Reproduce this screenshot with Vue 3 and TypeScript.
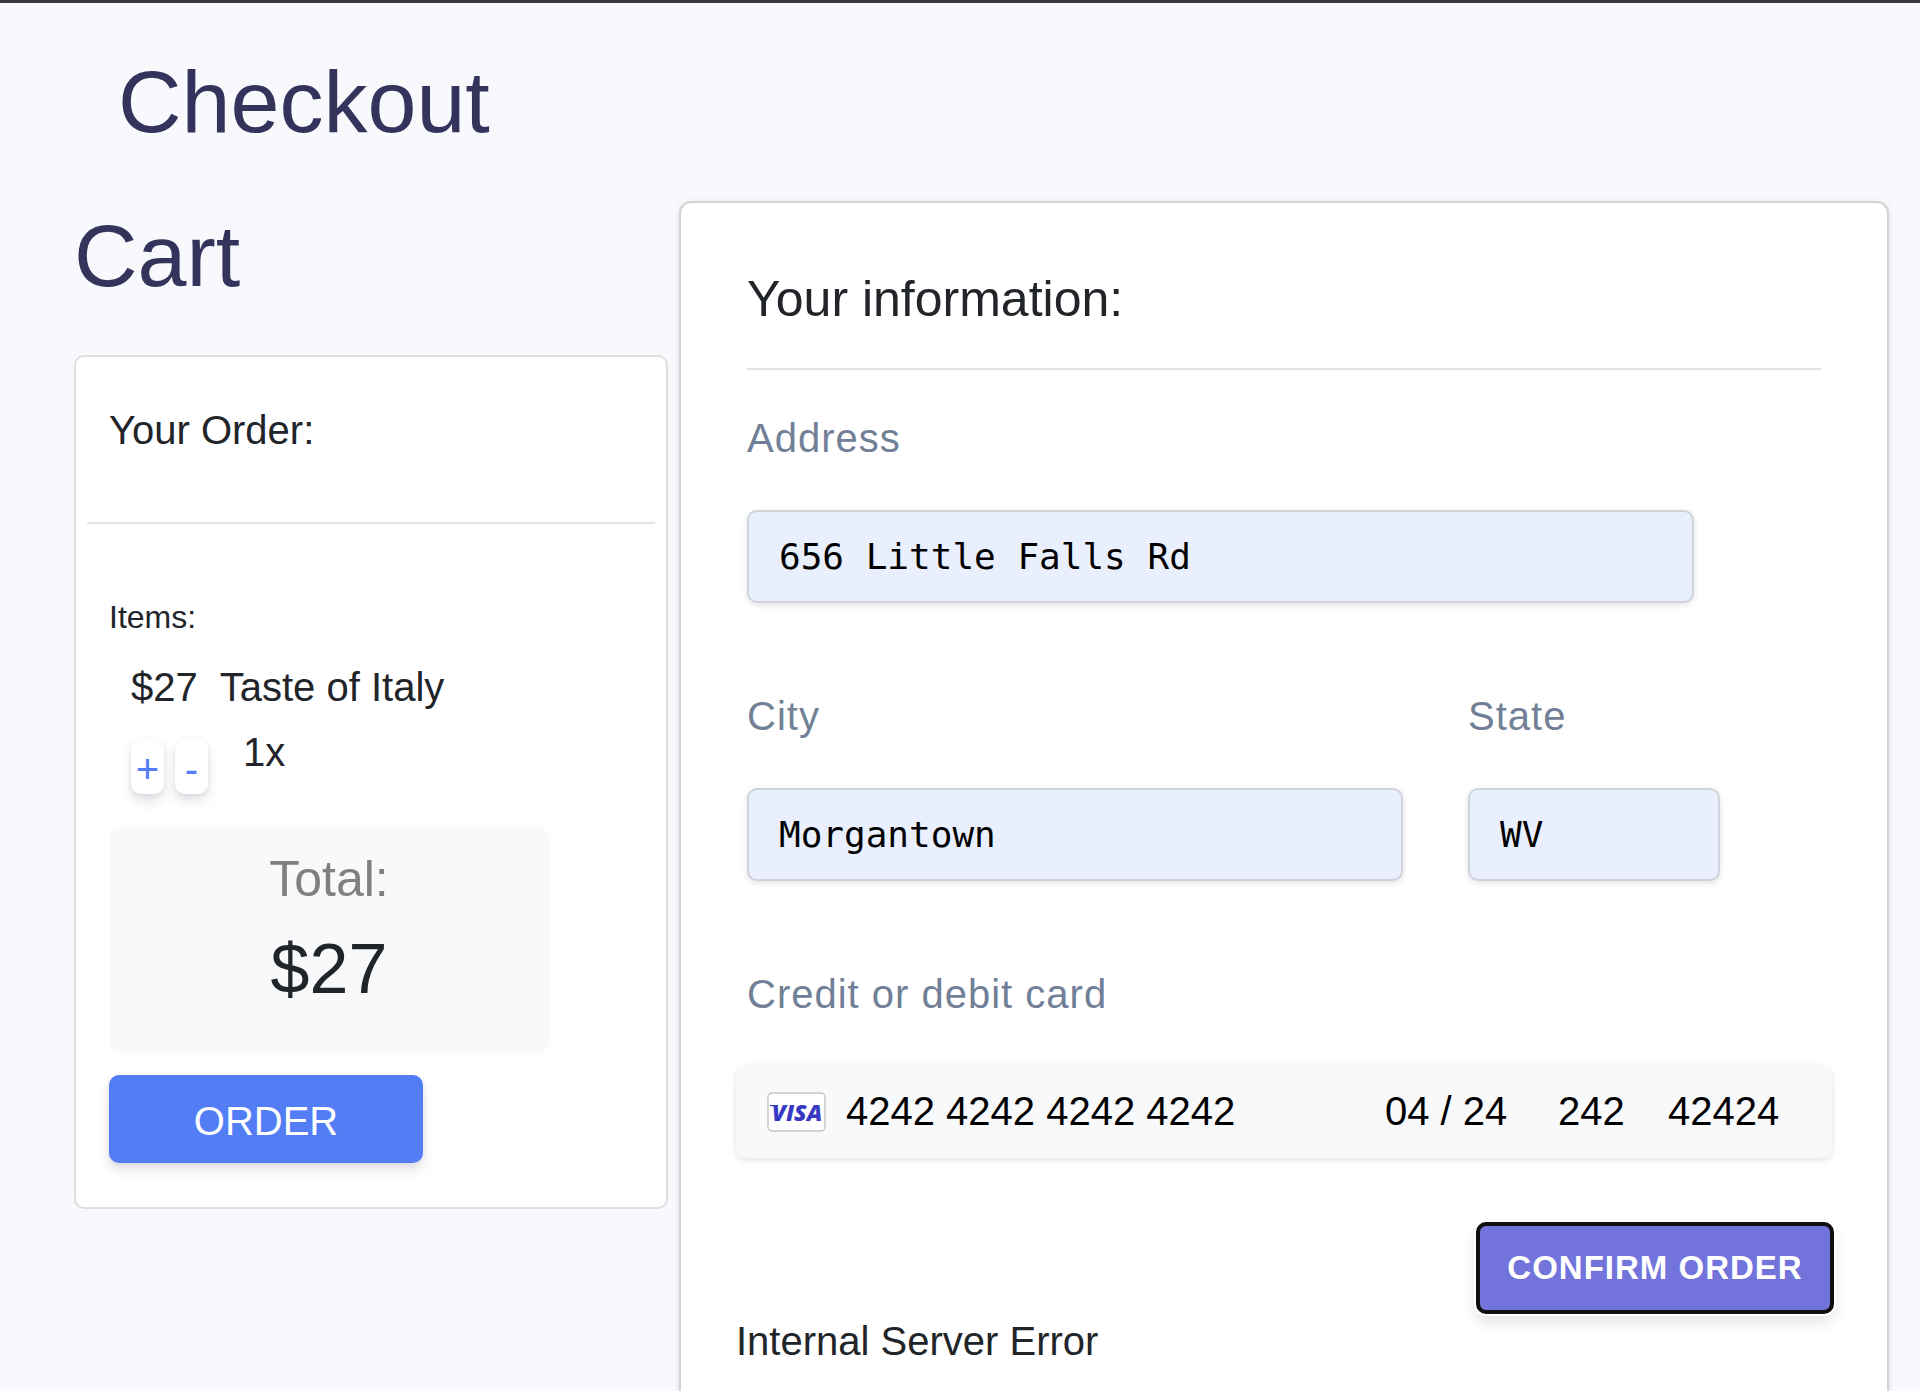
<script setup lang="ts">
import { computed, reactive, ref } from 'vue'

interface CartItem {
  id: number
  name: string
  price: number
  quantity: number
}

const items = reactive<CartItem[]>([
  { id: 1, name: 'Taste of Italy', price: 27, quantity: 1 },
])

const total = computed(() =>
  items.reduce((sum, item) => sum + item.price * item.quantity, 0),
)

const form = reactive({
  address: '656 Little Falls Rd',
  city: 'Morgantown',
  state: 'WV',
  cardNumber: '4242 4242 4242 4242',
  expiry: '04 / 24',
  cvc: '242',
  zip: '42424',
})

const error = ref('Internal Server Error')

function changeQuantity(item: CartItem, step: number): void {
  item.quantity = Math.max(0, item.quantity + step)
}
</script>

<template>
  <div class="page">
    <h1 class="title">Checkout</h1>
    <main class="columns">
      <section class="cart">
        <h2 class="cart-title">Cart</h2>
        <div class="cart-card">
          <h3 class="order-heading">Your Order:</h3>
          <hr class="rule cart-rule" />
          <p class="items-label">Items:</p>
          <div v-for="item in items" :key="item.id" class="item">
            <div class="item-line">
              <span>${{ item.price }}</span>
              <span>{{ item.name }}</span>
            </div>
            <div class="quantity">
              <button type="button" class="step" aria-label="Add one" @click="changeQuantity(item, 1)">+</button>
              <button type="button" class="step" aria-label="Remove one" @click="changeQuantity(item, -1)">-</button>
              <span class="count">{{ item.quantity }}x</span>
            </div>
          </div>
          <div class="total">
            <p class="total-label">Total:</p>
            <p class="total-value">${{ total }}</p>
          </div>
          <button type="button" class="order">ORDER</button>
        </div>
      </section>

      <form class="panel" @submit.prevent>
        <div class="fields">
          <h2 class="panel-heading">Your information:</h2>
          <hr class="rule panel-rule" />
          <div class="field address">
            <label for="address">Address</label>
            <input id="address" v-model="form.address" class="text-input" type="text" />
          </div>
          <div class="field-row">
            <div class="field">
              <label for="city">City</label>
              <input id="city" v-model="form.city" class="text-input" type="text" />
            </div>
            <div class="field">
              <label for="state">State</label>
              <input id="state" v-model="form.state" class="text-input" type="text" />
            </div>
          </div>
          <label class="card-label" for="card-number">Credit or debit card</label>
        </div>
        <div class="card-bar">
          <svg class="brand" viewBox="0 0 59 40" role="img" aria-label="Visa">
            <rect x="1" y="1" width="57" height="38" rx="4" fill="#ffffff" stroke="#c8c8cc" stroke-width="1.5" />
            <path d="M3 13h6l2 4c-2-2-5-3-8-3z" fill="#3639c4" />
            <text x="30" y="29" text-anchor="middle" class="brand-text">VISA</text>
          </svg>
          <input id="card-number" v-model="form.cardNumber" class="card-input number" type="text" />
          <input v-model="form.expiry" class="card-input expiry" type="text" aria-label="Expiry date" />
          <input v-model="form.cvc" class="card-input cvc" type="text" aria-label="Security code" />
          <input v-model="form.zip" class="card-input zip" type="text" aria-label="ZIP code" />
        </div>
        <button type="submit" class="confirm">CONFIRM ORDER</button>
        <p class="error" role="alert">{{ error }}</p>
      </form>
    </main>
  </div>
</template>

<style>
body {
  margin: 0;
  background: #f8f9fd;
}
</style>

<style scoped>
.page,
.page * {
  box-sizing: border-box;
}

.page {
  display: flex;
  flex-direction: column;
  min-height: 100vh;
  padding: 46px 31px 0 74px;
  border-top: 3px solid #38393d;
  background: #f8f9fd;
  color: #212529;
  font-family: "Liberation Sans", Arial, sans-serif;
  font-size: 40px;
  line-height: 60px;
}

h1,
h2,
h3,
p {
  margin: 0;
  font-weight: 400;
}

button,
input {
  font-family: inherit;
}

.title,
.cart-title {
  color: #35335b;
  font-size: 88px;
  line-height: 106px;
}

.title {
  margin: 0 0 46px 44px;
}

.cart-title {
  padding-top: 2px;
}

.columns {
  display: grid;
  flex: 1;
  grid-template-columns: minmax(0, 594fr) minmax(0, 1210fr);
  gap: 11px;
}

.rule {
  height: 2px;
  border: 0;
  background: #e4e4e5;
}

.cart-card {
  margin-top: 46px;
  padding: 43px 33px 44px;
  border: 2px solid #dfdfe0;
  border-radius: 10px;
  background: #fff;
}

.order-heading {
  font-size: 40px;
}

.cart-rule {
  margin: 62px -22px 69px;
}

.items-label {
  font-size: 32px;
  line-height: 48px;
}

.item {
  margin-top: 16px;
  padding-left: 22px;
}

.item-line {
  display: flex;
  gap: 22px;
}

.quantity {
  display: flex;
  align-items: flex-start;
  gap: 11px;
  margin-top: 5px;
}

.step {
  width: 33px;
  height: 55px;
  margin-top: 17px;
  padding: 6px 0 0;
  border: 0;
  border-radius: 10px;
  background: #fff;
  box-shadow: 0 8px 12px rgba(50, 50, 93, 0.11), 0 2px 6px rgba(0, 0, 0, 0.08);
  color: #527df7;
  font-size: 40px;
  line-height: 49px;
}

.count {
  margin-left: 24px;
}

.total {
  max-width: 440px;
  margin-top: 33px;
  padding: 22px 0 34px;
  border-radius: 10px;
  background: #f8f9fb;
  text-align: center;
}

.total-label {
  color: #808080;
  font-size: 50px;
}

.total-value {
  margin-top: 10px;
  font-size: 70px;
  line-height: 100px;
}

.order {
  display: block;
  width: 314px;
  height: 88px;
  margin-top: 22px;
  padding: 4px 0 0;
  border: 0;
  border-radius: 10px;
  background: #527df5;
  box-shadow: 0 8px 12px rgba(50, 50, 93, 0.11), 0 2px 6px rgba(0, 0, 0, 0.08);
  color: #fff;
  font-size: 40px;
}

.panel {
  padding: 66px 55px 26px;
  border: 2px solid #d1d2d4;
  border-bottom: 0;
  border-radius: 12px 12px 0 0;
  background: #fff;
  box-shadow: 0 2px 6px rgba(0, 0, 0, 0.12);
}

.fields {
  padding: 0 11px;
}

.panel-heading {
  font-size: 50px;
}

.panel-rule {
  margin: 39px 0 38px;
}

label {
  display: block;
  color: #718096;
  letter-spacing: 1px;
}

.address {
  padding-right: 127px;
}

.field-row {
  display: grid;
  grid-template-columns: minmax(0, 656fr) minmax(0, 252fr);
  gap: 65px;
  margin: 83px 0;
  padding-right: 101px;
}

.text-input {
  display: block;
  width: 100%;
  height: 93px;
  margin-top: 42px;
  padding: 0 30px;
  border: 2px solid #cfd3da;
  border-radius: 10px;
  outline: 0;
  background: #e9effc;
  box-shadow: 0 2px 6px rgba(0, 0, 0, 0.12);
  color: #000;
  font-family: Consolas, "DejaVu Sans Mono", monospace;
  font-size: 36px;
}

.card-bar {
  display: flex;
  align-items: center;
  height: 93px;
  margin-top: 41px;
  padding: 0 52px 0 31px;
  border-radius: 10px;
  background: #f8f9fb;
  box-shadow: 0 2px 6px rgba(0, 0, 0, 0.12);
}

.brand {
  flex: none;
  width: 59px;
  height: 40px;
  margin-right: 20px;
}

.brand-text {
  fill: #3639c4;
  font-family: "Open Sans", sans-serif;
  font-size: 23px;
  font-style: italic;
  font-weight: 800;
}

.card-input {
  min-width: 0;
  padding: 0;
  border: 0;
  outline: 0;
  background: transparent;
  color: #000;
  font-size: 40px;
}

.number {
  flex: 1;
}

.expiry {
  width: 173px;
}

.cvc {
  width: 110px;
}

.zip {
  width: 112px;
}

.confirm {
  display: block;
  width: 358px;
  height: 92px;
  margin: 64px -2px 0 auto;
  padding: 0;
  border: 4px solid #101010;
  border-radius: 10px;
  background: #7274dc;
  box-shadow: 0 0 0 2px #fff, 0 8px 14px rgba(50, 50, 93, 0.14);
  color: #fff;
  font-size: 33px;
  font-weight: 700;
  letter-spacing: 1px;
}

.error {
  margin-top: 3px;
  line-height: 48px;
}
</style>
